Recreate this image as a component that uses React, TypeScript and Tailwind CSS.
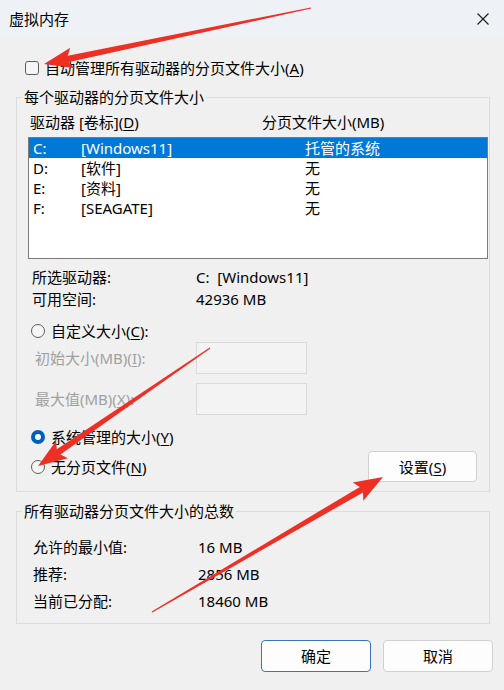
import React from 'react';

const font = { fontFamily: '"Noto Sans", "Noto Sans CJK SC", sans-serif' };

// tapered annotation arrow: thin at the tail, wide triangle at the tip
const arrowPoints = (x1: number, y1: number, x2: number, y2: number) => {
  const dx = x2 - x1;
  const dy = y2 - y1;
  const len = Math.hypot(dx, dy);
  const ux = dx / len;
  const uy = dy / len;
  const nx = -uy;
  const ny = ux;
  const headL = 25;
  const bx = x2 - ux * headL;
  const by = y2 - uy * headL;
  const pts = [
    [x1 + nx * 0.6, y1 + ny * 0.6],
    [bx + nx * 3.2, by + ny * 3.2],
    [bx - ux * 4 + nx * 10.5, by - uy * 4 + ny * 10.5],
    [x2, y2],
    [bx - ux * 4 - nx * 10.5, by - uy * 4 - ny * 10.5],
    [bx - nx * 3.2, by - ny * 3.2],
    [x1 - nx * 0.6, y1 - ny * 0.6],
  ];
  return pts.map((p) => `${p[0].toFixed(1)},${p[1].toFixed(1)}`).join(' ');
};

const Key = ({ k }: { k: string }) => (
  <>
    (<u className="underline underline-offset-2">{k}</u>)
  </>
);

const Radio = ({ checked }: { checked?: boolean }) =>
  checked ? (
    <span className="w-[14px] h-[14px] rounded-full bg-[#005fb8] flex items-center justify-center shrink-0">
      <span className="w-[6px] h-[6px] rounded-full bg-white" />
    </span>
  ) : (
    <span className="w-[14px] h-[14px] rounded-full border border-[#5d5d5d] bg-[#f6f6f6] shrink-0" />
  );

const drives = [
  { d: 'C:', label: '[Windows11]', size: '托管的系统', selected: true },
  { d: 'D:', label: '[软件]', size: '无' },
  { d: 'E:', label: '[资料]', size: '无' },
  { d: 'F:', label: '[SEAGATE]', size: '无' },
];

export default function App() {
  return (
    <div
      className="relative w-[504px] h-[690px] overflow-hidden bg-[#f0f0f0] text-[15px] leading-[20px] text-black"
      style={font}
    >
      {/* title bar */}
      <div className="h-[37px] bg-[#eef2f6] flex items-center justify-between pl-[9px] pr-[14px]">
        <span className="text-[15px]">虚拟内存</span>
        <svg width="12" height="12" viewBox="0 0 12 12" className="mr-[1px]">
          <path d="M0.5 0.5 L11.5 11.5 M11.5 0.5 L0.5 11.5" stroke="#1a1a1a" strokeWidth="1.1" />
        </svg>
      </div>

      <div className="pt-[24px]">
        <div className="flex items-center h-[14px] pl-[25px] gap-[6px]">
          <span className="w-[14px] h-[14px] rounded-[3px] border border-[#5d5d5d] bg-[#f6f6f6]" />
          <span>
            自动管理所有驱动器的分页文件大小<Key k="A" />
          </span>
        </div>

        {/* per-drive group */}
        <fieldset className="mt-[12px] ml-[16px] w-[474px] border border-[#dcdcdc] pl-[11px] pr-[1px] pb-[9px]">
          <legend className="-ml-[6px] px-[2px] h-[20px]">每个驱动器的分页文件大小</legend>
          <div className="mt-[5px] h-[20px] flex">
            <span className="pl-[2px] w-[234px]">
              驱动器 [卷标]<Key k="D" />
            </span>
            <span>分页文件大小(MB)</span>
          </div>
          <div className="mt-[5px] w-[460px] h-[122px] border border-[#7a7a7a] bg-white">
            {drives.map((r) => (
              <div
                key={r.d}
                className={`h-[20px] flex items-center ${r.selected ? 'bg-[#0078d7] text-white' : ''}`}
              >
                <span className="pl-[4px] w-[52px]">{r.d}</span>
                <span className="w-[224px]">{r.label}</span>
                <span>{r.size}</span>
              </div>
            ))}
          </div>

          <div className="mt-[8px] h-[20px] flex">
            <span className="pl-[4px] w-[168px]">所选驱动器:</span>
            <span>C:&nbsp;&nbsp;[Windows11]</span>
          </div>
          <div className="mt-[2px] h-[20px] flex">
            <span className="pl-[4px] w-[168px]">可用空间:</span>
            <span>42936 MB</span>
          </div>

          <div className="mt-[12px] h-[20px] flex items-center gap-[6px] pl-[3px]">
            <Radio />
            <span>
              自定义大小<Key k="C" />:
            </span>
          </div>
          <div className="mt-[1px] h-[32px] flex items-center">
            <span className="pl-[7px] w-[168px] text-[#a0a0a0]">
              初始大小(MB)<Key k="I" />:
            </span>
            <span className="w-[111px] h-[32px] border border-[#dadada] bg-[#f3f3f3]" />
          </div>
          <div className="mt-[9px] h-[32px] flex items-center">
            <span className="pl-[7px] w-[168px] text-[#a0a0a0]">
              最大值(MB)<Key k="X" />:
            </span>
            <span className="w-[111px] h-[32px] border border-[#dadada] bg-[#f3f3f3]" />
          </div>

          <div className="mt-[12px] h-[20px] flex items-center gap-[6px] pl-[3px]">
            <Radio checked />
            <span>
              系统管理的大小<Key k="Y" />
            </span>
          </div>
          <div className="mt-[4px] h-[31px] flex items-center justify-between pl-[3px] pr-[11px]">
            <div className="flex items-center gap-[6px]">
              <Radio />
              <span>
                无分页文件<Key k="N" />
              </span>
            </div>
            <button className="w-[109px] h-[31px] rounded-[4px] border border-[#d0d0d0] bg-[#fdfdfd]">
              设置<Key k="S" />
            </button>
          </div>
        </fieldset>

        {/* totals group */}
        <fieldset className="mt-[9px] ml-[16px] w-[474px] border border-[#dcdcdc] pl-[16px] pb-[12px]">
          <legend className="-ml-[11px] px-[2px] h-[20px]">所有驱动器分页文件大小的总数</legend>
          <div className="mt-[16px] flex flex-col gap-[7px]">
            {[
              ['允许的最小值:', '16 MB'],
              ['推荐:', '2856 MB'],
              ['当前已分配:', '18460 MB'],
            ].map(([k, v]) => (
              <div key={k} className="h-[20px] flex">
                <span className="w-[165px]">{k}</span>
                <span>{v}</span>
              </div>
            ))}
          </div>
        </fieldset>

        <div className="mt-[16px] flex justify-end gap-[12px] pr-[11px]">
          <button className="w-[110px] h-[32px] rounded-[4px] border border-[#3b73c4] bg-[#fdfdfd]">确定</button>
          <button className="w-[110px] h-[32px] rounded-[4px] border border-[#d0d0d0] bg-[#fdfdfd]">取消</button>
        </div>
      </div>

      {/* red annotation arrows */}
      <svg className="absolute inset-0 pointer-events-none" width="504" height="690">
        <polygon points={arrowPoints(311, 8, 44, 64)} fill="#ee2f24" />
        <polygon points={arrowPoints(210, 348, 38, 466)} fill="#ee2f24" />
        <polygon points={arrowPoints(152, 612, 383, 477)} fill="#ee2f24" />
      </svg>
    </div>
  );
}
